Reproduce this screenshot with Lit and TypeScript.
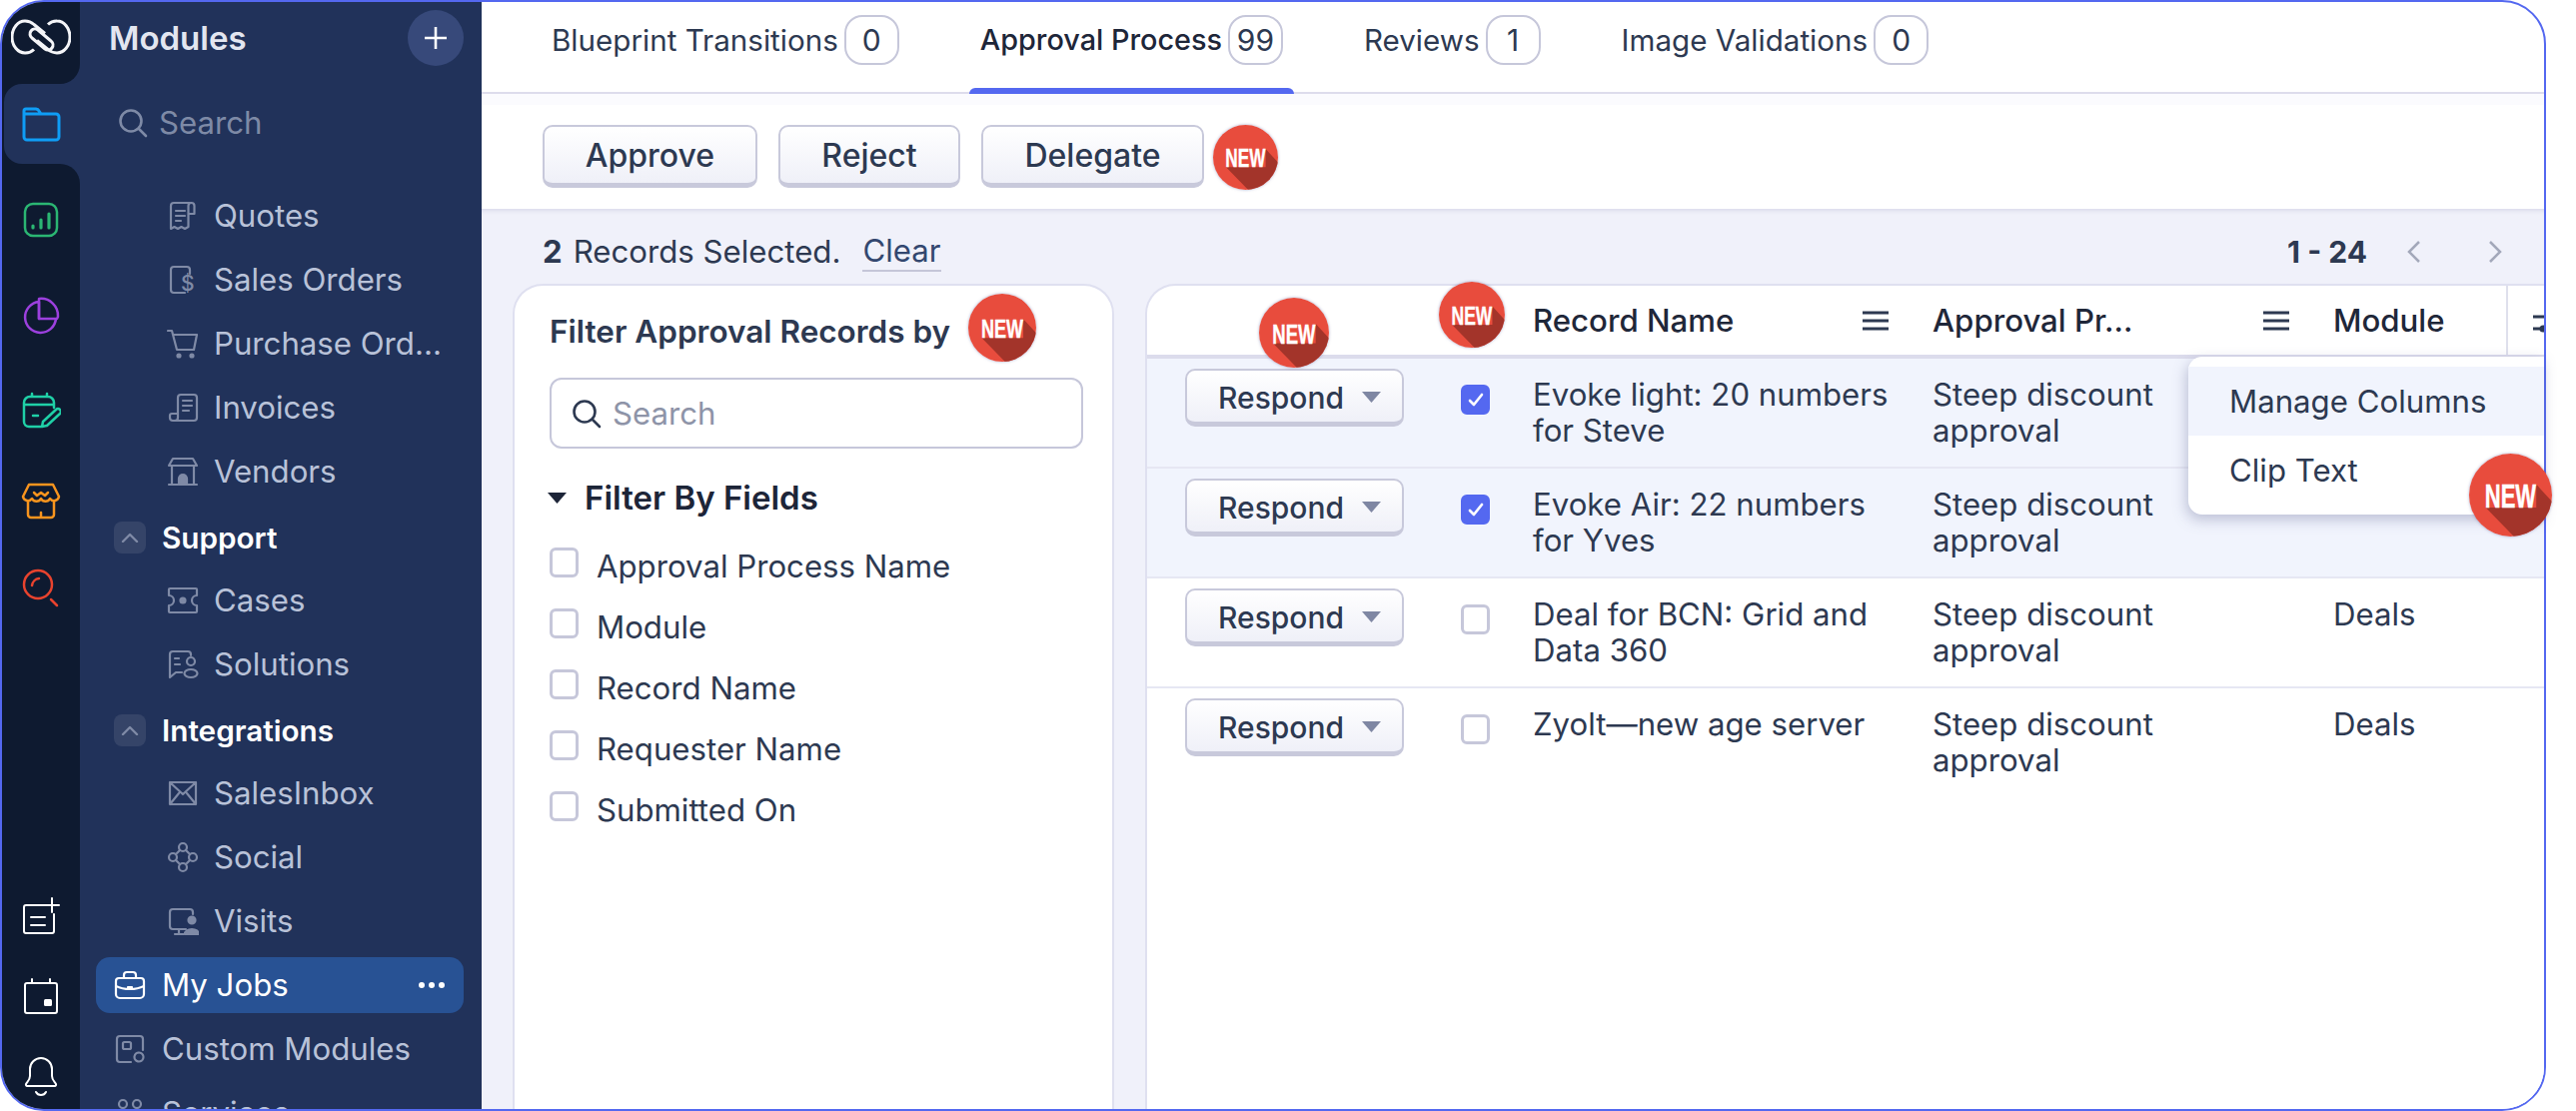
import { LitElement, html, css, svg } from 'lit';
import { customElement } from 'lit/decorators.js';

const navIcons: Record<string, unknown> = {
  quotes: svg`<path d="M23 3H7a3 3 0 0 0-3 3v23l3.5-2 3.5 2 3.5-2 3.500 2 3.500-2V6a3 3 0 0 1 3-3 3 3 0 0 1 3 3v8h-6"/><path d="M9 11h9M9 16h9M9 21h5"/>`,
  orders: svg`<path d="M18 29H7a3 3 0 0 1-3-3V6a3 3 0 0 1 3-3h13a3 3 0 0 1 3 3v4"/><text x="14" y="27" font-size="21" font-weight="500" fill="currentColor" stroke="none" font-family="Inter, sans-serif">$</text>`,
  cart: svg`<path d="M1 3h4l5 19h17l3-15H7"/><circle cx="12" cy="28" r="1.500" fill="currentColor"/><circle cx="25" cy="28" r="1.500" fill="currentColor"/>`,
  invoices: svg`<path d="M11 22V6a3 3 0 0 1 3-3h13a3 3 0 0 1 3 3v20a3 3 0 0 1-3 3H6a3 3 0 0 1-3-3v-2a2 2 0 0 1 2-2h6v4a3 3 0 0 1-3 3"/><path d="M16 9h9M16 14h9M16 19h6"/>`,
  vendors: svg`<path d="M6 3h20l4 7H2zM5 10v19h22V10M2 29h28"/><path d="M12 29v-6a4 4 0 0 1 8 0v6z" fill="currentColor"/>`,
  cases: svg`<path d="M3 4h26a1 1 0 0 1 1 1v6a5 5 0 0 0 0 10v6a1 1 0 0 1-1 1H3a1 1 0 0 1-1-1v-6a5 5 0 0 0 0-10V5a1 1 0 0 1 1-1z"/><circle cx="16" cy="16" r="2.500" fill="currentColor"/>`,
  solutions: svg`<path d="M15 24H9l-6 5V6a3 3 0 0 1 3-3h15a3 3 0 0 1 3 3v1"/><path d="M8 10h4M8 16h5"/><circle cx="24" cy="13" r="4"/><ellipse cx="24" cy="25" rx="6.500" ry="4"/>`,
  inbox: svg`<path d="M3 5h26v22H3zM3 5l13 12L29 5M3 27l9-11M29 27l-9-11"/>`,
  social: svg`<circle cx="16" cy="6" r="4"/><circle cx="6" cy="16" r="4"/><circle cx="26" cy="16" r="4"/><circle cx="16" cy="26" r="4"/><path d="M13 9l-4 4M19 9l4 4M9 19l4 4M23 19l-4 4"/>`,
  visits: svg`<path d="M19 24H6a3 3 0 0 1-3-3V7a3 3 0 0 1 3-3h17a3 3 0 0 1 3 3v2M12 24v5M8 29h9"/><circle cx="25" cy="15" r="3.500" fill="currentColor"/><path d="M18 29a7 5 0 0 1 14 0z" fill="currentColor"/>`,
  jobs: svg`<path d="M5 9h22a3 3 0 0 1 3 3v13a4 4 0 0 1-4 4H6a4 4 0 0 1-4-4V12a3 3 0 0 1 3-3z"/><path d="M10 9V6a3 3 0 0 1 3-3h6a3 3 0 0 1 3 3v3M2 17c8 4 20 4 28 0M14 18h4"/>`,
  custom: svg`<path d="M17 29H6a3 3 0 0 1-3-3V6a3 3 0 0 1 3-3h20a3 3 0 0 1 3 3v11"/><rect x="9" y="9" width="8" height="7" rx="1.500"/><circle cx="25" cy="24" r="4.500" stroke-dasharray="3 1"/>`,
  services: svg`<circle cx="9" cy="7" r="4"/><circle cx="23" cy="7" r="4"/><path d="M3 24v-3a6 6 0 0 1 12 0v3"/>`,
};

type NavRow = { kind: 'sub' | 'group' | 'leaf' | 'active'; label: string; icon?: string };

const navRows: NavRow[] = [
  { kind: 'sub', label: 'Quotes', icon: 'quotes' },
  { kind: 'sub', label: 'Sales Orders', icon: 'orders' },
  { kind: 'sub', label: 'Purchase Ord...', icon: 'cart' },
  { kind: 'sub', label: 'Invoices', icon: 'invoices' },
  { kind: 'sub', label: 'Vendors', icon: 'vendors' },
  { kind: 'group', label: 'Support' },
  { kind: 'sub', label: 'Cases', icon: 'cases' },
  { kind: 'sub', label: 'Solutions', icon: 'solutions' },
  { kind: 'group', label: 'Integrations' },
  { kind: 'sub', label: 'SalesInbox', icon: 'inbox' },
  { kind: 'sub', label: 'Social', icon: 'social' },
  { kind: 'sub', label: 'Visits', icon: 'visits' },
  { kind: 'active', label: 'My Jobs', icon: 'jobs' },
  { kind: 'leaf', label: 'Custom Modules', icon: 'custom' },
  { kind: 'leaf', label: 'Services', icon: 'services' },
];

const tabs = [
  { label: 'Blueprint Transitions', count: '0' },
  { label: 'Approval Process', count: '99', active: true },
  { label: 'Reviews', count: '1' },
  { label: 'Image Validations', count: '0' },
];

const fields = ['Approval Process Name', 'Module', 'Record Name', 'Requester Name', 'Submitted On'];

const records = [
  { name: ['Evoke light: 20 numbers', 'for Steve'], selected: true, module: '' },
  { name: ['Evoke Air: 22 numbers', 'for Yves'], selected: true, module: '' },
  { name: ['Deal for BCN: Grid and', 'Data 360'], selected: false, module: 'Deals' },
  { name: ['Zyolt—new age server'], selected: false, module: 'Deals' },
];

@customElement('new-badge')
class NewBadge extends LitElement {
  static styles = css`
    :host {
      display: block;
      width: 66px;
      height: 66px;
      flex: none;
      border-radius: 50%;
      box-shadow: 0 0 3px rgba(90, 90, 150, 0.55);
    }
    svg {
      display: block;
      width: 100%;
      height: 100%;
    }
    text {
      font-family: 'Liberation Sans', sans-serif;
      font-weight: 700;
      font-size: 39px;
      fill: #fff;
      stroke: #fff;
      stroke-width: 0.6px;
    }
  `;

  protected render() {
    return html`<svg viewBox="0 0 100 100">
      <clipPath id="c"><circle cx="50" cy="50" r="50" /></clipPath>
      <g clip-path="url(#c)">
        <rect width="100" height="100" fill="#e84c3d" />
        <path d="M20 65H81V37L102 60V102H56Z" fill="#a3342a" />
      </g>
      <text transform="translate(19 65) scale(0.68 1)">NEW</text>
    </svg>`;
  }
}

@customElement('app-root')
class AppRoot extends LitElement {
  static styles = css`
    :host {
      display: block;
      position: relative;
      width: 2548px;
      height: 1112px;
      font-family: Inter, 'Noto Sans', sans-serif;
      font-size: 31.2px;
      line-height: 36px;
      color: #2d3951;
    }
    * {
      box-sizing: border-box;
    }
    svg {
      display: block;
      flex: none;
    }
    .frame {
      display: flex;
      width: 100%;
      height: 100%;
      border: 2px solid #5468f0;
      border-radius: 44px;
      overflow: hidden;
      background: #fff;
    }

    .rail {
      width: 78px;
      flex: none;
      display: flex;
      flex-direction: column;
      background: #21325a;
    }
    .rail-logo {
      height: 82px;
      flex: none;
      background: #0e1a30;
      border-bottom-right-radius: 20px;
      display: flex;
      align-items: center;
      justify-content: center;
      padding-bottom: 12px;
    }
    .rail-logo svg {
      width: 60px;
      height: 36px;
      fill: none;
      stroke: #f4f5f8;
      stroke-width: 3;
    }
    .rail-active-wrap {
      height: 80px;
      flex: none;
      background: linear-gradient(to right, #0e1a30 20px, #21325a 20px);
    }
    .rail-active {
      height: 100%;
      margin-left: 2px;
      padding-right: 2px;
      background: #21325a;
      border-radius: 18px 0 0 18px;
      display: flex;
      align-items: center;
      justify-content: center;
    }
    .rail-rest {
      flex: 1;
      background: #0e1a30;
      border-top-right-radius: 20px;
      display: flex;
      flex-direction: column;
      justify-content: space-between;
      padding: 36px 0 13px;
    }
    .rail-top {
      display: grid;
      grid-template-rows: 96px 95px 90px 87px 40px;
      justify-items: center;
    }
    .rail-bottom {
      display: grid;
      grid-auto-rows: 80px;
      justify-items: center;
      align-items: end;
    }
    .rail-active svg,
    .rail-rest svg {
      width: 40px;
      height: 40px;
      fill: none;
      stroke-width: 2.5;
      stroke-linecap: round;
      stroke-linejoin: round;
    }
    .rail-bottom svg {
      stroke-width: 2;
    }

    .side {
      width: 402px;
      flex: none;
      background: #21325a;
      color: #b9c2d8;
      overflow: hidden;
    }
    .side-head {
      height: 72px;
      display: flex;
      align-items: center;
      justify-content: space-between;
      padding: 0 18px 0 29px;
      font-weight: 600;
      font-size: 33px;
      color: #e3e6f0;
    }
    .plus {
      width: 56px;
      height: 56px;
      border-radius: 50%;
      background: #37497a;
      display: flex;
      align-items: center;
      justify-content: center;
    }
    .plus svg {
      width: 24px;
      height: 24px;
      stroke: #fff;
      stroke-width: 2.6;
    }
    .side-search {
      height: 64px;
      margin-top: 17px;
      padding-left: 38px;
      display: flex;
      align-items: center;
      gap: 11px;
      color: #7e8aa6;
    }
    .side-list {
      margin-top: 29px;
    }
    .nav {
      height: 64px;
      display: flex;
      align-items: center;
      gap: 15px;
      white-space: nowrap;
    }
    .nav svg {
      width: 32px;
      height: 32px;
      fill: none;
      stroke: #7f8aa6;
      color: #7f8aa6;
      stroke-width: 2.2;
      stroke-linecap: round;
      stroke-linejoin: round;
    }
    .nav.sub {
      padding-left: 87px;
    }
    .nav.leaf {
      padding-left: 34px;
      gap: 16px;
    }
    .nav.group {
      height: 65px;
      padding: 2px 0 0 34px;
      gap: 16px;
      color: #fff;
      font-weight: 600;
      font-size: 29.7px;
    }
    .nav.active {
      height: 56px;
      margin: 4px 18px 4px 16px;
      padding: 0 18px;
      gap: 16px;
      background: #285294;
      border-radius: 14px;
      color: #fff;
    }
    .nav.active svg {
      stroke: #fff;
      color: #fff;
    }
    .nav.active .dots {
      margin-left: auto;
      width: 28px;
      height: 8px;
      stroke: none;
      fill: #fff;
    }
    .fold {
      width: 32px;
      height: 32px;
      flex: none;
      border-radius: 8px;
      background: rgba(255, 255, 255, 0.09);
      display: flex;
      align-items: center;
      justify-content: center;
    }
    .nav .fold svg {
      width: 18px;
      height: 10px;
    }

    .main {
      flex: 1;
      min-width: 0;
      display: flex;
      flex-direction: column;
    }
    .tabs {
      height: 92px;
      flex: none;
      display: flex;
      gap: 81px;
      padding-left: 70px;
      border-bottom: 2px solid #dddcec;
      font-size: 29.6px;
    }
    .tab {
      position: relative;
      height: 90px;
      display: flex;
      align-items: center;
      gap: 6px;
      padding-bottom: 14px;
      white-space: nowrap;
    }
    .tab.on {
      color: #1e2639;
      font-weight: 500;
      font-size: 28.8px;
    }
    .tab.on::after {
      content: '';
      position: absolute;
      left: -11px;
      right: -11px;
      bottom: -2px;
      height: 6px;
      background: #5468f0;
      border-radius: 6px 6px 0 0;
    }
    .count {
      min-width: 55px;
      height: 50px;
      display: flex;
      align-items: center;
      justify-content: center;
      border: 2px solid #c6c7da;
      border-radius: 18px;
      color: #2d3951;
      font-weight: 400;
      font-size: 30px;
    }

    .toolbar {
      height: 115px;
      flex: none;
      display: flex;
      align-items: flex-start;
      gap: 21px;
      padding: 31px 0 0 61px;
      background: linear-gradient(#fbfbfe 11px, #fff 11px);
    }
    .btn {
      height: 63px;
      display: flex;
      align-items: center;
      justify-content: center;
      padding-top: 2px;
      border: 2px solid #c8c9db;
      border-bottom-width: 5px;
      border-radius: 10px;
      background: linear-gradient(#fff, #eff0f8);
      font-weight: 500;
      font-size: 32px;
      white-space: nowrap;
    }
    .toolbar .btn:nth-child(1) {
      width: 215px;
    }
    .toolbar .btn:nth-child(2) {
      width: 182px;
    }
    .toolbar .btn:nth-child(3) {
      width: 223px;
    }
    .toolbar new-badge {
      width: 65px;
      height: 65px;
      margin-left: -12px;
    }

    .content {
      flex: 1;
      min-height: 0;
      display: flex;
      flex-direction: column;
      background: #f0f1fa;
      box-shadow: inset 0 5px 4px -3px rgba(120, 120, 170, 0.18);
    }
    .status {
      height: 75px;
      flex: none;
      display: flex;
      align-items: center;
      padding: 11px 0 0 61px;
      white-space: nowrap;
    }
    .status b {
      font-weight: 700;
      margin-right: 11px;
    }
    .status a {
      margin-left: 22px;
      color: #33476f;
      border-bottom: 2px solid #c5c6d8;
      line-height: 38px;
    }
    .pager {
      margin-left: auto;
      display: flex;
      align-items: center;
      padding-right: 42px;
      font-weight: 700;
      font-size: 30px;
    }
    .pager svg {
      width: 14px;
      height: 24px;
      fill: none;
      stroke: #a3a8ba;
      stroke-width: 2.5;
    }
    .pager svg.prev {
      margin-left: 40px;
    }
    .pager svg.next {
      margin-left: 67px;
    }

    .panels {
      flex: 1;
      min-height: 0;
      display: flex;
      gap: 31px;
      padding-left: 31px;
    }
    .filters {
      width: 602px;
      flex: none;
      background: #fff;
      border: 2px solid #dfe0f0;
      border-bottom: none;
      border-radius: 30px 30px 0 0;
      padding: 8px 29px 0 35px;
    }
    .filters-title {
      height: 68px;
      display: flex;
      align-items: center;
      gap: 18px;
      font-weight: 600;
      font-size: 31.5px;
      white-space: nowrap;
    }
    .filters-title span {
      padding-top: 7px;
    }
    .filters-title new-badge {
      width: 68px;
      height: 68px;
    }
    .search {
      height: 71px;
      margin-top: 16px;
      display: flex;
      align-items: center;
      gap: 11px;
      padding-left: 20px;
      border: 2px solid #c6c7da;
      border-radius: 12px;
      color: #8e94a8;
    }
    .search svg,
    .side-search svg {
      width: 30px;
      height: 30px;
      fill: none;
      stroke: currentColor;
      stroke-width: 2.6;
      stroke-linecap: round;
    }
    .search svg {
      stroke: #2d3951;
    }
    .fields-title {
      display: flex;
      align-items: center;
      gap: 18px;
      margin-top: 31px;
      font-weight: 600;
      font-size: 33px;
      color: #1d2538;
    }
    .fields-title svg {
      width: 19px;
      height: 11px;
      margin-left: -2px;
      fill: #1d2538;
    }
    .fields {
      margin-top: 20px;
    }
    .field {
      height: 61px;
      display: flex;
      align-items: center;
      gap: 18px;
      white-space: nowrap;
    }
    .box {
      width: 29px;
      height: 30px;
      flex: none;
      border: 3px solid #c6c7da;
      border-radius: 6px;
      background: #fff;
    }
    .field .box {
      margin-bottom: 8px;
    }
    .box.on {
      background: #5468f0;
      border-color: #5468f0;
      display: flex;
      align-items: center;
      justify-content: center;
    }
    .box.on svg {
      width: 16px;
      height: 14px;
      fill: none;
      stroke: #fff;
      stroke-width: 2.6;
      stroke-linecap: round;
      stroke-linejoin: round;
    }

    .table {
      flex: 1;
      min-width: 0;
      background: #fff;
      border: 2px solid #dfe0f0;
      border-right: none;
      border-bottom: none;
      border-radius: 30px 0 0 0;
    }
    .row {
      display: grid;
      grid-template-columns: 294px 92px 400px 401px 1fr;
      height: 110px;
      border-bottom: 2px solid #e6e7f3;
    }
    .row.sel {
      background: #f1f4fd;
    }
    .row.last {
      border-bottom: none;
    }
    .row.head {
      height: 73px;
      border-bottom: 4px solid #dcdcec;
      border-radius: 28px 0 0 0;
      position: relative;
      align-items: center;
      font-weight: 500;
      color: #1f2739;
    }
    .head-cell {
      display: flex;
      align-items: center;
      justify-content: space-between;
      padding-right: 44px;
      white-space: nowrap;
    }
    .head-cell svg {
      width: 26px;
      height: 20px;
      stroke: #2d3951;
      stroke-width: 3;
    }
    .head-last {
      position: relative;
      align-self: stretch;
      display: flex;
      align-items: center;
    }
    .head-last::after {
      content: '';
      position: absolute;
      left: 173px;
      top: 0;
      bottom: 0;
      width: 2px;
      background: #dfe0ec;
    }
    .head-last svg {
      position: absolute;
      left: 198px;
      top: 28px;
      width: 24px;
      height: 20px;
      fill: #2d3951;
    }
    .head-last path {
      fill: none;
      stroke: #2d3951;
      stroke-width: 3;
    }
    .head new-badge {
      position: absolute;
      z-index: 2;
    }
    .head .badge-respond {
      left: 112px;
      top: 12px;
      width: 70px;
      height: 70px;
    }
    .head .badge-check {
      left: 292px;
      top: -4px;
      width: 66px;
      height: 66px;
    }
    .cell-action {
      padding: 10px 0 0 38px;
    }
    .btn.respond {
      width: 219px;
      height: 58px;
      justify-content: flex-start;
      gap: 18px;
      padding-left: 31px;
      font-size: 30px;
    }
    .respond svg {
      width: 19px;
      height: 11px;
      fill: #7f87a3;
    }
    .cell-check {
      padding: 26px 0 0 20px;
    }
    .cell-text {
      padding-top: 18px;
      white-space: nowrap;
    }

    .menu {
      position: absolute;
      left: 2190px;
      top: 357px;
      width: 356px;
      height: 158px;
      padding-top: 10px;
      background: #fff;
      border-radius: 14px 0 0 14px;
      box-shadow: -2px 5px 14px rgba(90, 95, 140, 0.35);
      z-index: 3;
    }
    .menu div {
      height: 69px;
      display: flex;
      align-items: center;
      padding-left: 41px;
    }
    .menu div:first-child {
      background: #f1f4fd;
    }
    .menu-badge {
      position: absolute;
      left: 2471px;
      top: 454px;
      width: 83px;
      height: 83px;
      z-index: 4;
    }
  `;

  private _renderNav(row: NavRow) {
    return html`<div class="nav ${row.kind}">
      ${row.kind === 'group'
        ? html`<span class="fold"
            ><svg viewBox="0 0 18 10"><path d="M2 9l7-7 7 7" stroke-width="2.4" /></svg></span
          >`
        : html`<svg viewBox="0 0 32 32">${navIcons[row.icon!]}</svg>`}
      <span>${row.label}</span>
      ${row.kind === 'active'
        ? html`<svg class="dots" viewBox="0 0 28 8">
            <circle cx="4" cy="4" r="3" /><circle cx="14" cy="4" r="3" /><circle cx="24" cy="4" r="3" />
          </svg>`
        : ''}
    </div>`;
  }

  private _renderRail() {
    return html`<div class="rail">
      <div class="rail-logo">
        <svg viewBox="0 0 60 36">
          <path d="M23 30.500A12.500 12.500 0 0 1 14 34 13 16 0 0 1 14 2a14 14 0 0 1 9 3.500l11 9" />
          <path d="M37 5.500A12.500 12.500 0 0 1 46 2a13 16 0 0 1 0 32 14 14 0 0 1-9-3.500L26 21.500" />
          <path d="M20 12a5 5 0 0 1 7-1l13 11a5 5 0 0 1-6 8L21 19a5 5 0 0 1-1-7z" />
        </svg>
      </div>
      <div class="rail-active-wrap">
        <div class="rail-active">
          <svg viewBox="0 0 40 40" stroke="#0f9df5">
            <path stroke-width="3" d="M3 10V7a2 2 0 0 1 2-2h10a4 4 0 0 1 3 2l2 3h15a3 3 0 0 1 3 3v20a3 3 0 0 1-3 3H6a3 3 0 0 1-3-3V10h17" />
          </svg>
        </div>
      </div>
      <div class="rail-rest">
        <div class="rail-top">
          <svg viewBox="0 0 40 40" stroke="#2bb673">
            <rect x="4" y="4" width="32" height="32" rx="8" />
            <path d="M12 28v-2M20 28v-8M28 28V14" stroke-width="3.200" />
          </svg>
          <svg viewBox="0 0 40 40" stroke="#9c40de">
            <path d="M18 6a15.500 15.500 0 1 0 17 17H18z" />
            <path d="M18 23V3a17 17 0 0 1 19 18l-1 2" />
          </svg>
          <svg viewBox="0 0 40 40" stroke="#1fd0a7">
            <path d="M20 36H8a5 5 0 0 1-5-5V12a6 6 0 0 1 6-6h18a6 6 0 0 1 6 6v5M3 14h30M11 3v3M26 3v3M12 25h5" />
            <path d="M21 36l1-5 13-12a2.500 2.500 0 0 1 4 4L26 35z" />
          </svg>
          <svg viewBox="0 0 40 40" stroke="#f7941e">
            <path d="M8 4h24l6 12a5 5 0 0 1-9 2 5 5 0 0 1-9 0 5 5 0 0 1-9 0 5 5 0 0 1-9-2z" />
            <path d="M7 21v13a3 3 0 0 0 3 3h20a3 3 0 0 0 3-3V21M20 37v-5" />
            <path d="M13 12l3 3 4-3 4 3 3-3" />
          </svg>
          <svg viewBox="0 0 40 40" stroke="#e8432e">
            <circle cx="17" cy="17" r="14" />
            <path d="M11 18a8 8 0 0 1 7-7M30 32l6 6" />
          </svg>
        </div>
        <div class="rail-bottom">
          <svg viewBox="0 0 40 40" stroke="#fff">
            <path d="M24 9H5a2 2 0 0 0-2 2v24a2 2 0 0 0 2 2h26a2 2 0 0 0 2-2V18M10 21h14M10 29h14M31 2v14M24 9h14" />
          </svg>
          <svg viewBox="0 0 40 40" stroke="#fff">
            <rect x="4" y="7" width="32" height="30" rx="2" />
            <path d="M11 3v4M29 3v4" />
            <rect x="23" y="23" width="8" height="7" rx="1.500" fill="#fff" stroke="none" />
          </svg>
          <svg viewBox="0 0 40 40" stroke="#fff">
            <path d="M20 2a11 11 0 0 0-11 11v7c0 4-3 6-4 8a1.500 1.500 0 0 0 1 2h28a1.500 1.500 0 0 0 1-2c-1-2-4-4-4-8v-7A11 11 0 0 0 20 2zM15 36c2 4 8 4 10 0" />
          </svg>
        </div>
      </div>
    </div>`;
  }

  private _renderSide() {
    return html`<div class="side">
      <div class="side-head">
        <span>Modules</span>
        <div class="plus">
          <svg viewBox="0 0 24 24"><path d="M12 1v22M1 12h22" /></svg>
        </div>
      </div>
      <div class="side-search">
        <svg viewBox="0 0 30 30"><circle cx="13" cy="13" r="10.500" /><path d="M21 21l7 7" /></svg>
        <span>Search</span>
      </div>
      <div class="side-list">${navRows.map((row) => this._renderNav(row))}</div>
    </div>`;
  }

  private _renderFilters() {
    return html`<div class="filters">
      <div class="filters-title"><span>Filter Approval Records by</span><new-badge></new-badge></div>
      <div class="search">
        <svg viewBox="0 0 30 30"><circle cx="13" cy="13" r="10.500" /><path d="M21 21l7 7" /></svg>
        <span>Search</span>
      </div>
      <div class="fields-title">
        <svg viewBox="0 0 19 11"><path d="M0 0h19l-9.500 11z" /></svg>
        <span>Filter By Fields</span>
      </div>
      <div class="fields">
        ${fields.map((f) => html`<div class="field"><span class="box"></span><span>${f}</span></div>`)}
      </div>
    </div>`;
  }

  private _renderTable() {
    const burger = html`<svg viewBox="0 0 26 20"><path d="M0 2h26M0 10h26M0 18h26" /></svg>`;
    return html`<div class="table">
      <div class="row head">
        <new-badge class="badge-respond"></new-badge>
        <new-badge class="badge-check"></new-badge>
        <div></div>
        <div></div>
        <div class="head-cell"><span>Record Name</span>${burger}</div>
        <div class="head-cell"><span>Approval Pr...</span>${burger}</div>
        <div class="head-last">
          <span>Module</span>
          <svg viewBox="0 0 24 20"><path d="M2 3h22M2 15h22" /><circle cx="12" cy="15" r="3.500" /></svg>
        </div>
      </div>
      ${records.map(
        (r, i) => html`<div class="row ${r.selected ? 'sel' : ''} ${i === records.length - 1 ? 'last' : ''}">
          <div class="cell-action">
            <div class="btn respond">
              <span>Respond</span>
              <svg viewBox="0 0 19 11"><path d="M0 0h19l-9.500 11z" /></svg>
            </div>
          </div>
          <div class="cell-check">
            ${r.selected
              ? html`<div class="box on"><svg viewBox="0 0 16 14"><path d="M2 8l4 4 8-10" /></svg></div>`
              : html`<div class="box"></div>`}
          </div>
          <div class="cell-text">${r.name.map((l) => html`<div>${l}</div>`)}</div>
          <div class="cell-text"><div>Steep discount</div><div>approval</div></div>
          <div class="cell-text">${r.module}</div>
        </div>`,
      )}
    </div>`;
  }

  protected render() {
    return html`<div class="frame">
        ${this._renderRail()} ${this._renderSide()}
        <div class="main">
          <div class="tabs">
            ${tabs.map(
              (t) => html`<div class="tab ${t.active ? 'on' : ''}">
                <span>${t.label}</span><span class="count">${t.count}</span>
              </div>`,
            )}
          </div>
          <div class="toolbar">
            <div class="btn">Approve</div>
            <div class="btn">Reject</div>
            <div class="btn">Delegate</div>
            <new-badge></new-badge>
          </div>
          <div class="content">
            <div class="status">
              <b>2</b><span>Records Selected.</span><a>Clear</a>
              <div class="pager">
                <span>1 - 24</span>
                <svg class="prev" viewBox="0 0 14 24"><path d="M12 2L2 12l10 10" /></svg>
                <svg class="next" viewBox="0 0 14 24"><path d="M2 2l10 10L2 22" /></svg>
              </div>
            </div>
            <div class="panels">${this._renderFilters()} ${this._renderTable()}</div>
          </div>
        </div>
      </div>
      <div class="menu">
        <div>Manage Columns</div>
        <div>Clip Text</div>
      </div>
      <new-badge class="menu-badge"></new-badge>`;
  }
}
